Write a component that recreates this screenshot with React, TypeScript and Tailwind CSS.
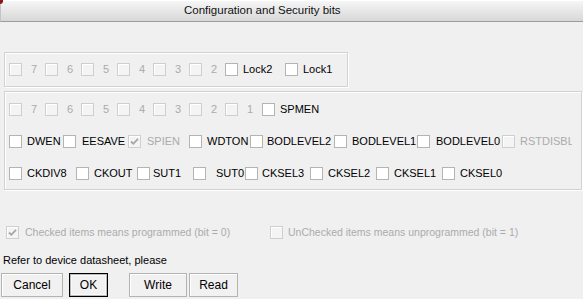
import React from "react";

type Item = {
  label: string;
  w: string;
  ml: string;
  checked?: boolean;
  disabled?: boolean;
  pre?: string;
};

function Box({ checked, disabled }: { checked?: boolean; disabled?: boolean }) {
  return (
    <span
      className={
        disabled
          ? "relative shrink-0 w-[13px] h-[13px] border border-[#cfcfcf] bg-[#f4f4f4] shadow-[inset_1px_1px_0_#ffffff]"
          : "relative shrink-0 w-[13px] h-[13px] border border-[#b4b4b4] bg-white"
      }
    >
      {checked && (
        <svg
          viewBox="0 0 11 11"
          className="absolute left-0 top-0 w-[11px] h-[11px]"
        >
          <path
            d="M2 5.5 L4.3 7.8 L9 2.8"
            fill="none"
            stroke="#a6a6a6"
            strokeWidth="1.8"
          />
        </svg>
      )}
    </span>
  );
}

function Check({ item }: { item: Item }) {
  return (
    <div
      className={`flex items-center shrink-0 overflow-hidden whitespace-nowrap ${item.w}`}
    >
      <div className={`flex items-center ${item.pre ?? ""}`}>
        <Box checked={item.checked} disabled={item.disabled} />
        <span
          className={`${item.ml} leading-none ${
            item.disabled ? "text-[#ababab]" : "text-black"
          }`}
        >
          {item.label}
        </span>
      </div>
    </div>
  );
}

const digits = (n: number[]): Item[] =>
  n.map((d) => ({ label: String(d), w: "w-[36px]", ml: "ml-[9px]", disabled: true }));

const lockRow: Item[] = [
  ...digits([7, 6, 5, 4, 3, 2]),
  { label: "Lock2", w: "w-[60px]", ml: "ml-[5px]" },
  { label: "Lock1", w: "w-[55px]", ml: "ml-[5px]" },
];

const row1: Item[] = [
  ...digits([7, 6, 5, 4, 3, 2, 1]),
  { label: "SPMEN", w: "w-[70px]", ml: "ml-[5px]", pre: "ml-[1px]" },
];

const row2: Item[] = [
  { label: "DWEN", w: "w-[54px]", ml: "ml-[5px]" },
  { label: "EESAVE", w: "w-[65px]", ml: "ml-[6px]" },
  { label: "SPIEN", w: "w-[61px]", ml: "ml-[6px]", checked: true, disabled: true },
  { label: "WDTON", w: "w-[61px]", ml: "ml-[5px]" },
  { label: "BODLEVEL2", w: "w-[84px]", ml: "ml-[4px]" },
  { label: "BODLEVEL1", w: "w-[83px]", ml: "ml-[5px]" },
  { label: "BODLEVEL0", w: "w-[85px]", ml: "ml-[6px]" },
  { label: "RSTDISBL", w: "w-[70px]", ml: "ml-[5px]", disabled: true },
];

const row3: Item[] = [
  { label: "CKDIV8", w: "w-[67px]", ml: "ml-[5px]" },
  { label: "CKOUT", w: "w-[61px]", ml: "ml-[5px]" },
  { label: "SUT1", w: "w-[56px]", ml: "ml-[3px]" },
  { label: "SUT0", w: "w-[52px]", ml: "ml-[10px]" },
  { label: "CKSEL3", w: "w-[65px]", ml: "ml-[4px]" },
  { label: "CKSEL2", w: "w-[66px]", ml: "ml-[5px]" },
  { label: "CKSEL1", w: "w-[66px]", ml: "ml-[5px]" },
  { label: "CKSEL0", w: "w-[70px]", ml: "ml-[5px]" },
];

function Row({ items, cls }: { items: Item[]; cls: string }) {
  return (
    <div className={`flex items-center pl-[4px] ${cls}`}>
      {items.map((it, i) => (
        <Check key={i} item={it} />
      ))}
    </div>
  );
}

function Btn({ label, cls, def }: { label: string; cls: string; def?: boolean }) {
  return (
    <div
      className={`h-[24px] flex items-center justify-center shrink-0 ${cls} ${
        def
          ? "border border-black shadow-[inset_0_0_0_1px_#b8b8b8,inset_0_0_0_2px_#fafafa] bg-[#f1f1f1]"
          : "border border-[#b3b3b3] shadow-[inset_1px_1px_0_#ffffff] bg-[#f1f1f1]"
      }`}
    >
      <span className="leading-none text-black text-[12px]">{label}</span>
    </div>
  );
}

export default function App() {
  return (
    <div
      className="relative w-[583px] h-[299px] overflow-hidden bg-[#f0f0f0] flex flex-col text-[11px]"
      style={{ fontFamily: '"Liberation Sans", Arial, sans-serif' }}
    >
      <div className="h-[22px] shrink-0 border-b border-[#9c9c9c] border-l border-l-[#c4c4c4] bg-gradient-to-b from-[#f7f7f7] to-[#d8d8d8] shadow-[inset_0_1px_0_#ffffff] flex items-center pl-[183px]">
        <span className="text-[11.5px] text-[#111] leading-none">
          Configuration and Security bits
        </span>
      </div>
      <span className="absolute left-0 top-0 w-[3px] h-[4px] bg-[#8e1616] rounded-br-[3px]" />

      <div className="mt-[30px] ml-[4px] w-[344px] h-[35px] shrink-0 border border-[#d2d2d2] shadow-[inset_1px_1px_0_#ffffff,1px_1px_0_#ffffff] flex items-center">
        <Row items={lockRow} cls="" />
      </div>

      <div className="mt-[4px] ml-[4px] w-[578px] h-[99px] shrink-0 border border-[#d2d2d2] shadow-[inset_1px_1px_0_#ffffff,1px_1px_0_#ffffff] pt-[1px] flex flex-col">
        <Row items={row1} cls="h-[32px]" />
        <Row items={row2} cls="h-[32px]" />
        <Row items={row3} cls="h-[32px]" />
      </div>

      <div className="mt-[34px] h-[16px] flex items-center pl-[6px] text-[10.5px]">
        <div className="w-[264px] flex items-center shrink-0">
          <Box checked disabled />
          <span className="ml-[6px] leading-none text-[#ababab]">
            Checked items means programmed (bit = 0)
          </span>
        </div>
        <div className="flex items-center shrink-0">
          <Box disabled />
          <span className="ml-[5px] leading-none text-[#ababab]">
            UnChecked items means unprogrammed (bit = 1)
          </span>
        </div>
      </div>

      <div className="mt-[13px] h-[14px] flex items-center pl-[3px]">
        <span className="leading-none text-black">Refer to device datasheet, please</span>
      </div>

      <div className="mt-[6px] flex items-center">
        <Btn label="Cancel" cls="ml-[1px] w-[62px]" />
        <Btn label="OK" cls="ml-[6px] w-[39px]" def />
        <Btn label="Write" cls="ml-[21px] w-[58px]" />
        <Btn label="Read" cls="ml-[2px] w-[49px]" />
      </div>
    </div>
  );
}
